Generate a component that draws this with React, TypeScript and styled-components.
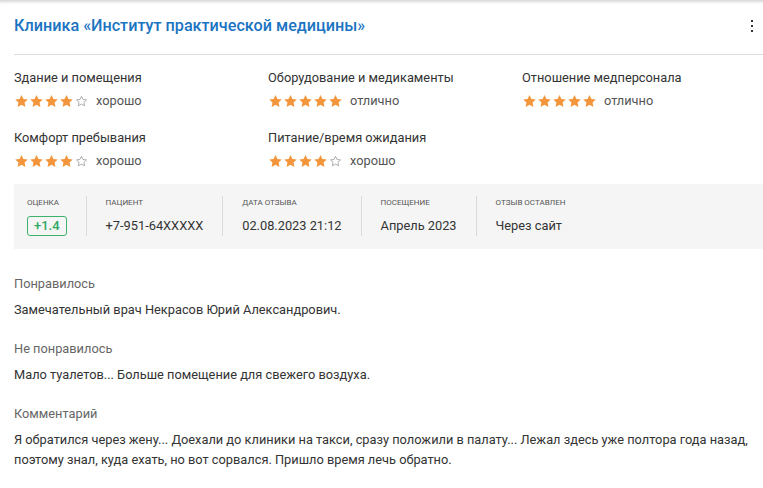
import React from "react";
import styled, { createGlobalStyle } from "styled-components";

const GlobalStyle = createGlobalStyle`
  html, body {
    margin: 0;
    padding: 0;
    background: #fff;
  }
  body {
    font-family: Roboto, "Noto Sans", Arial, sans-serif;
    color: #333;
    overflow: hidden;
  }
`;

const Card = styled.div`
  width: 763px;
  min-height: 488px;
  box-sizing: border-box;
  padding-left: 14px;
  box-shadow: inset 0 4px 3px -2px rgba(0, 0, 0, 0.16);
`;

const Header = styled.div`
  display: flex;
  align-items: center;
  justify-content: space-between;
  padding: 16px 8px 18px 0;
  border-bottom: 1px solid #dcdcdc;
`;

const Title = styled.h1`
  margin: 0;
  font-size: 16.2px;
  line-height: 20px;
  font-weight: 500;
  color: #1b74c2;
`;

const Kebab = styled.button`
  display: flex;
  flex-direction: column;
  gap: 3px;
  padding: 0 2px;
  border: none;
  background: none;
  cursor: pointer;
  span {
    width: 2px;
    height: 2px;
    background: #333;
  }
`;

const Ratings = styled.div`
  display: grid;
  grid-template-columns: repeat(3, 254px);
  row-gap: 19px;
  padding-top: 14px;
`;

const RatingItem = styled.div`
  display: flex;
  flex-direction: column;
  gap: 5px;
`;

const RatingLabel = styled.div`
  font-size: 12.8px;
  line-height: 18px;
  color: #333;
`;

const StarsRow = styled.div`
  display: flex;
  align-items: center;
  height: 18px;
`;

const Stars = styled.div`
  display: flex;
  align-items: center;
  margin-right: 7px;
`;

const RatingText = styled.span`
  font-size: 12.8px;
  line-height: 18px;
  color: #555;
`;

const InfoBar = styled.div`
  display: flex;
  align-items: stretch;
  margin-top: 14px;
  background: #f5f5f5;
  padding: 12px 0 13px 13px;
`;

const InfoItem = styled.div<{ $last?: boolean }>`
  display: flex;
  flex-direction: column;
  gap: 8px;
  padding: 2px 19px 0 0;
  margin-right: 19px;
  border-right: ${(p) => (p.$last ? "none" : "1px solid #dadada")};
`;

const InfoLabel = styled.div`
  font-size: 8px;
  line-height: 10px;
  text-transform: uppercase;
  color: #555;
`;

const InfoValue = styled.div`
  font-size: 12.8px;
  line-height: 20px;
  color: #333;
  height: 20px;
  display: flex;
  align-items: center;
`;

const Badge = styled.span`
  display: inline-block;
  box-sizing: border-box;
  height: 20px;
  padding: 0 6px;
  border: 1px solid #3bb36d;
  border-radius: 3px;
  color: #2ea862;
  font-size: 13px;
  font-weight: 500;
  line-height: 18px;
`;

const Sections = styled.div`
  padding-top: 25px;
  padding-right: 10px;
`;

const Section = styled.div`
  & + & {
    margin-top: 19px;
  }
`;

const SectionLabel = styled.div`
  font-size: 12.8px;
  line-height: 20px;
  color: #666;
`;

const SectionText = styled.p`
  margin: 6px 0 0;
  font-size: 12.8px;
  line-height: 20px;
  color: #333;
`;

const STAR =
  "M12 1.6l3.05 6.35 6.95.9-5.1 4.8 1.35 6.95L12 17.2l-6.25 3.4 1.35-6.95L2 8.85l6.95-.9z";

function Star({ filled }: { filled: boolean }) {
  return filled ? (
    <svg width="15" height="15" viewBox="0 0 24 24">
      <path d={STAR} fill="#f3953a" />
    </svg>
  ) : (
    <svg width="15" height="15" viewBox="0 0 24 24">
      <path
        d={STAR}
        fill="none"
        stroke="#999"
        strokeWidth="1.6"
        strokeLinejoin="round"
        transform="translate(2.4 2.4) scale(0.8)"
      />
    </svg>
  );
}

type Rating = { label: string; value: number; text: string };

const ratings: Rating[] = [
  { label: "Здание и помещения", value: 4, text: "хорошо" },
  { label: "Оборудование и медикаменты", value: 5, text: "отлично" },
  { label: "Отношение медперсонала", value: 5, text: "отлично" },
  { label: "Комфорт пребывания", value: 4, text: "хорошо" },
  { label: "Питание/время ожидания", value: 4, text: "хорошо" },
];

const info = [
  { label: "Пациент", value: "+7-951-64XXXXX" },
  { label: "Дата отзыва", value: "02.08.2023 21:12" },
  { label: "Посещение", value: "Апрель 2023" },
  { label: "Отзыв оставлен", value: "Через сайт" },
];

const sections = [
  { label: "Понравилось", text: "Замечательный врач Некрасов Юрий Александрович." },
  { label: "Не понравилось", text: "Мало туалетов... Больше помещение для свежего воздуха." },
  {
    label: "Комментарий",
    text:
      "Я обратился через жену... Доехали до клиники на такси, сразу положили в палату... Лежал здесь уже полтора года назад, поэтому знал, куда ехать, но вот сорвался. Пришло время лечь обратно.",
  },
];

export default function App() {
  return (
    <>
      <GlobalStyle />
      <Card>
        <Header>
          <Title>Клиника «Институт практической медицины»</Title>
          <Kebab aria-label="Меню">
            <span />
            <span />
            <span />
          </Kebab>
        </Header>

        <Ratings>
          {ratings.map((r) => (
            <RatingItem key={r.label}>
              <RatingLabel>{r.label}</RatingLabel>
              <StarsRow>
                <Stars>
                  {[1, 2, 3, 4, 5].map((i) => (
                    <Star key={i} filled={i <= r.value} />
                  ))}
                </Stars>
                <RatingText>{r.text}</RatingText>
              </StarsRow>
            </RatingItem>
          ))}
        </Ratings>

        <InfoBar>
          <InfoItem>
            <InfoLabel>Оценка</InfoLabel>
            <InfoValue>
              <Badge>+1.4</Badge>
            </InfoValue>
          </InfoItem>
          {info.map((it, i) => (
            <InfoItem key={it.label} $last={i === info.length - 1}>
              <InfoLabel>{it.label}</InfoLabel>
              <InfoValue>{it.value}</InfoValue>
            </InfoItem>
          ))}
        </InfoBar>

        <Sections>
          {sections.map((s) => (
            <Section key={s.label}>
              <SectionLabel>{s.label}</SectionLabel>
              <SectionText>{s.text}</SectionText>
            </Section>
          ))}
        </Sections>
      </Card>
    </>
  );
}
